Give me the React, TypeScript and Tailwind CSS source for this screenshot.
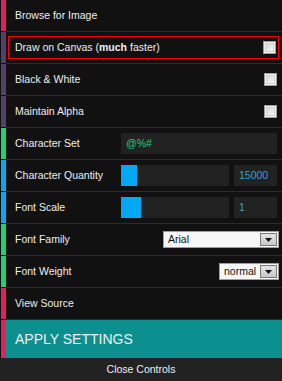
import React from "react";

const font = { fontFamily: '"Liberation Sans", Arial, sans-serif' };

function Stripe({ color }: { color: string }) {
  return <div className={`w-[5px] shrink-0 mb-px ${color}`} />;
}

function Row({
  color,
  children,
}: {
  color: string;
  children: React.ReactNode;
}) {
  return (
    <div className="flex h-8">
      <Stripe color={color} />
      <div className="flex-1 flex items-center border-b border-[#2c2c2c] pl-[9px] pr-[5px]">
        {children}
      </div>
    </div>
  );
}

function Checkbox() {
  return (
    <div className="w-[13px] h-[13px] shrink-0 border border-[#9a9a9a] bg-[#f4f4f4] p-px">
      <div className="w-full h-full border border-[#d0d0d0] bg-gradient-to-br from-[#dadada] to-[#f6f6f6]" />
    </div>
  );
}

function Slider({ fill, value }: { fill: number; value: string }) {
  return (
    <div className="flex flex-1 gap-[5px] h-[21px]">
      <div className="w-[108px] bg-[#222222]">
        <div className="h-full bg-[#03a9f4]" style={{ width: fill }} />
      </div>
      <div className="flex-1 bg-[#222222] flex items-center pl-[5px] text-[#2fa1d6]">
        {value}
      </div>
    </div>
  );
}

function Select({ width, value }: { width: string; value: string }) {
  return (
    <div
      className={`${width} h-[17px] border border-[#9d9d9d] bg-[#f7f7f7] flex p-px`}
    >
      <div className="flex-1 flex items-center pl-[3px] text-[#111111] leading-none">
        {value}
      </div>
      <div className="w-[17px] h-full border border-[#7a7a7a] bg-gradient-to-b from-[#e4e4e4] to-[#c8c8c8] flex items-end justify-center pb-[3px]">
        <svg width="7" height="4" viewBox="0 0 7 4">
          <path d="M0 0h7L3.5 4z" fill="#111" />
        </svg>
      </div>
    </div>
  );
}

export default function App() {
  return (
    <div className="w-[282px] h-[381px] bg-[#111111] text-[#eeeeee] text-[10.5px] pl-px flex flex-col" style={font}>
      <Row color="bg-[#e61d5f]">
        <span>Browse for Image</span>
      </Row>

      <div className="flex h-8">
        <Stripe color="bg-[#52406a]" />
        <div className="flex-1 flex items-center border-b border-[#2c2c2c] pl-[2px] pr-[3px]">
          <div className="flex-1 h-[23px] border border-[#ff0000] flex items-center justify-between pl-[6px] pr-[2px]">
            <span>
              Draw on Canvas (<b>much</b> faster)
            </span>
            <Checkbox />
          </div>
        </div>
      </div>

      <Row color="bg-[#52406a]">
        <span className="flex-1">Black &amp; White</span>
        <Checkbox />
      </Row>

      <Row color="bg-[#52406a]">
        <span className="flex-1">Maintain Alpha</span>
        <Checkbox />
      </Row>

      <Row color="bg-[#1ed36f]">
        <span className="w-[106px] shrink-0">Character Set</span>
        <div className="flex-1 h-[21px] bg-[#222222] flex items-center pl-[5px] text-[#1ed36f]">
          @%#
        </div>
      </Row>

      <Row color="bg-[#03a9f4]">
        <span className="w-[106px] shrink-0">Character Quantity</span>
        <Slider fill={16} value="15000" />
      </Row>

      <Row color="bg-[#03a9f4]">
        <span className="w-[106px] shrink-0">Font Scale</span>
        <Slider fill={20} value="1" />
      </Row>

      <Row color="bg-[#1ed36f]">
        <span className="flex-1">Font Family</span>
        <div className="mr-[-2px]">
          <Select width="w-[116px]" value="Arial" />
        </div>
      </Row>

      <Row color="bg-[#1ed36f]">
        <span className="flex-1">Font Weight</span>
        <div className="mr-[-2px]">
          <Select width="w-[60px]" value="normal" />
        </div>
      </Row>

      <Row color="bg-[#e61d5f]">
        <span>View Source</span>
      </Row>

      <div className="flex h-[38px]">
        <div className="w-[5px] shrink-0 bg-[#e61d5f]" />
        <div className="flex-1 bg-[#0b8f8f] flex items-center pl-[9px] text-[14px] text-[#f0f0f0]">
          APPLY SETTINGS
        </div>
      </div>

      <div className="flex-1 -ml-px bg-[#222222] flex items-center justify-center">
        Close Controls
      </div>
    </div>
  );
}
